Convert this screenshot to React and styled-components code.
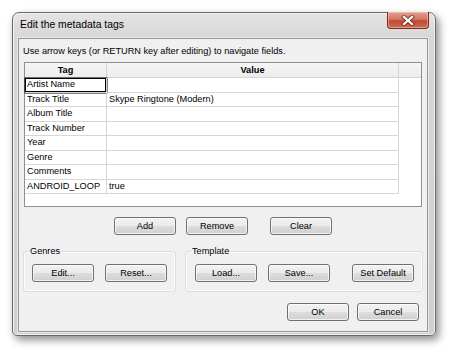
import React from "react";
import styled, { createGlobalStyle, css } from "styled-components";

const GlobalStyle = createGlobalStyle`
    html, body {
        margin: 0;
        padding: 0;
        background: #ffffff;
    }
    body {
        font-family: "Liberation Sans", Arial, sans-serif;
        font-size: 9.2px;
        color: #000000;
    }
    * {
        box-sizing: border-box;
    }
`;

const Page = styled.div`
    width: 450px;
    height: 353px;
    padding: 12px 14px 17px 12px;
`;

const Window = styled.div`
    width: 424px;
    height: 324px;
    display: flex;
    flex-direction: column;
    border: 1px solid #6a6a6a;
    border-radius: 7px 7px 5px 5px;
    background: linear-gradient(to bottom, #e4e4e4 0px, #d6d6d6 26px, #cfcfcf 100%);
    box-shadow: inset 0 0 0 1px #f2f2f2, 3px 4px 9px rgba(0, 0, 0, 0.45);
`;

const TitleBar = styled.div`
    height: 25px;
    flex: none;
    display: flex;
    justify-content: space-between;
    padding-left: 7px;
`;

const Title = styled.span`
    font-size: 10.4px;
    line-height: 24px;
    color: #000000;
`;

const CloseButton = styled.div`
    width: 42px;
    height: 17px;
    margin: -1px 6px 0 0;
    display: flex;
    align-items: center;
    justify-content: center;
    border: 1px solid #7b2a1d;
    border-top: none;
    border-radius: 0 0 4px 4px;
    background: linear-gradient(to bottom, #e3a193 0%, #d27764 45%, #c04a34 55%, #cf6a51 100%);
    box-shadow: inset 0 0 0 1px rgba(255, 210, 200, 0.5);
`;

const Client = styled.div`
    flex: 1;
    margin: 0 7px 3px 5px;
    border: 1px solid #979797;
    background: #f0f0f0;
    display: flex;
    flex-direction: column;
    box-shadow: 0 0 0 1px #e9e9e9;
`;

const Hint = styled.div`
    height: 23px;
    display: flex;
    align-items: center;
    padding-left: 4px;
    padding-top: 1px;
`;

const TableBox = styled.div`
    width: 398px;
    height: 145px;
    margin-left: 5px;
    border: 1px solid #8f8f8f;
    background: #ffffff;
`;

const HeaderRow = styled.div`
    display: grid;
    grid-template-columns: 82px 292px 1fr;
    height: 15px;
    background: linear-gradient(to bottom, #f6f6f6, #ececec);
    border-bottom: 1px solid #d5d5d5;
`;

const HeaderCell = styled.div`
    font-weight: bold;
    text-align: center;
    line-height: 14px;
    border-right: 1px solid #d5d5d5;

    &:last-child {
        border-right: none;
    }
`;

const Row = styled.div`
    display: grid;
    grid-template-columns: 82px 292px;
    width: 374px;
    height: 14.5px;
`;

const Cell = styled.div`
    line-height: 13.5px;
    padding-left: 2px;
    border-right: 1px solid #d6d6d6;
    border-bottom: 1px solid #d6d6d6;
    white-space: nowrap;
    overflow: hidden;
    ${(p) =>
        p.$focused &&
        css`
            box-shadow: inset 0 0 0 1px #000000, 0 0 0 0.5px #000000;
        `}
`;

const ButtonRow = styled.div`
    display: flex;
    margin-top: 10px;
    padding-left: 95px;
    gap: 10px;
`;

const Button = styled.button`
    width: 62px;
    height: 18px;
    padding: 0;
    margin-left: ${(p) => p.$push || 0}px;
    font-family: inherit;
    font-size: 9.2px;
    color: #000000;
    border: 1px solid #707070;
    border-radius: 3px;
    background: linear-gradient(to bottom, #f2f2f2 0%, #ebebeb 50%, #dddddd 51%, #cfcfcf 100%);
    box-shadow: inset 0 0 0 1px rgba(255, 255, 255, 0.7);
`;

const GroupRow = styled.div`
    display: flex;
    gap: 9px;
    margin: 11px 0 0 4px;
`;

const GroupBox = styled.fieldset`
    width: ${(p) => p.$w}px;
    height: 46px;
    margin: 0;
    padding: 0;
    border: 1px solid #d5dfe5;
    border-radius: 3px;
    box-shadow: inset 0 0 0 1px #fafcfd;
`;

const Legend = styled.legend`
    padding: 0 1px;
    margin-left: 5px;
    line-height: 11px;
`;

const GroupButtons = styled.div`
    display: flex;
    gap: 11px;
    padding: 7px 0 0 ${(p) => p.$pad}px;
`;

const Footer = styled.div`
    display: flex;
    justify-content: flex-end;
    gap: 8px;
    margin-top: 11px;
    padding-right: 8px;
`;

const rows = [
    ["Artist Name", ""],
    ["Track Title", "Skype Ringtone (Modern)"],
    ["Album Title", ""],
    ["Track Number", ""],
    ["Year", ""],
    ["Genre", ""],
    ["Comments", ""],
    ["ANDROID_LOOP", "true"],
];

const CloseGlyph = () => (
    <svg width="14" height="11" viewBox="0 0 14 11">
        <path
            d="M3 2 L11 9 M11 2 L3 9"
            stroke="#4a1810"
            strokeWidth="4.2"
            strokeLinecap="square"
            opacity="0.6"
        />
        <path d="M3 2 L11 9 M11 2 L3 9" stroke="#ffffff" strokeWidth="2.3" strokeLinecap="square" />
    </svg>
);

const App = () => {
    return (
        <Page>
            <GlobalStyle />
            <Window>
                <TitleBar>
                    <Title>Edit the metadata tags</Title>
                    <CloseButton>
                        <CloseGlyph />
                    </CloseButton>
                </TitleBar>
                <Client>
                    <Hint>Use arrow keys (or RETURN key after editing) to navigate fields.</Hint>
                    <TableBox>
                        <HeaderRow>
                            <HeaderCell>Tag</HeaderCell>
                            <HeaderCell>Value</HeaderCell>
                            <HeaderCell />
                        </HeaderRow>
                        {rows.map(([tag, value], i) => (
                            <Row key={tag}>
                                <Cell $focused={i === 0}>{tag}</Cell>
                                <Cell>{value}</Cell>
                            </Row>
                        ))}
                    </TableBox>
                    <ButtonRow>
                        <Button>Add</Button>
                        <Button>Remove</Button>
                        <Button $push={12}>Clear</Button>
                    </ButtonRow>
                    <GroupRow>
                        <GroupBox $w={153}>
                            <Legend>Genres</Legend>
                            <GroupButtons $pad={8}>
                                <Button>Edit...</Button>
                                <Button>Reset...</Button>
                            </GroupButtons>
                        </GroupBox>
                        <GroupBox $w={238}>
                            <Legend>Template</Legend>
                            <GroupButtons $pad={9}>
                                <Button>Load...</Button>
                                <Button>Save...</Button>
                                <Button $push={11}>Set Default</Button>
                            </GroupButtons>
                        </GroupBox>
                    </GroupRow>
                    <Footer>
                        <Button>OK</Button>
                        <Button>Cancel</Button>
                    </Footer>
                </Client>
            </Window>
        </Page>
    );
};

export default App;
